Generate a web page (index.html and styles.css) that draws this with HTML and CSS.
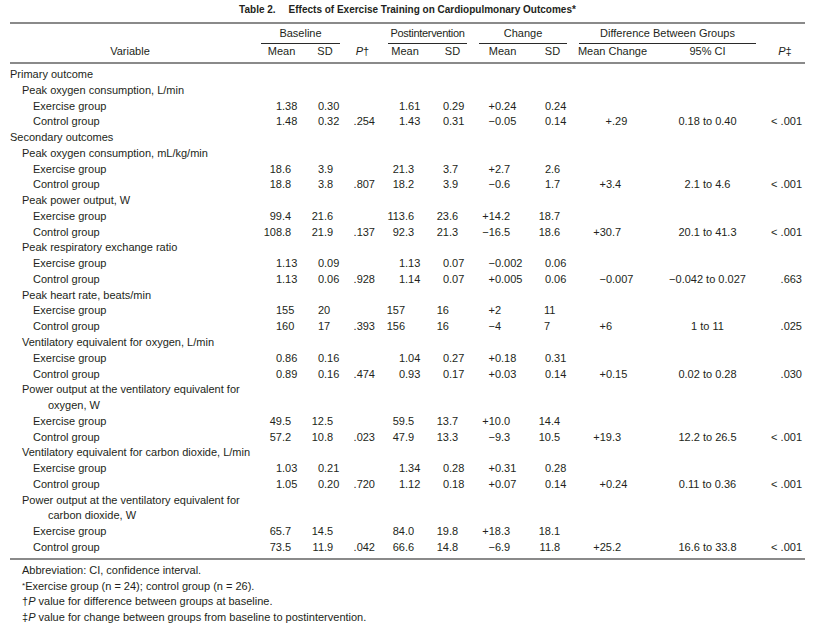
FILE: index.html
```html
<!DOCTYPE html>
<html lang="en">
<head>
<meta charset="utf-8">
<title>Table 2. Effects of Exercise Training on Cardiopulmonary Outcomes</title>
<link rel="stylesheet" href="styles.css">
</head>
<body>
<div class="page">
  <div class="title">Table 2.<span class="tgap">Effects of Exercise Training on Cardiopulmonary Outcomes*</span></div>
  <div class="rule"></div>
  <div class="row head1">
    <div></div>
    <div class="grp g-base">Baseline</div>
    <div></div>
    <div class="grp g-post">Postintervention</div>
    <div class="grp g-chg">Change</div>
    <div class="grp g-diff">Difference Between Groups</div>
    <div></div>
  </div>
  <div class="row head2">
    <div class="h hv">Variable</div>
    <div class="h">Mean</div>
    <div class="h">SD</div>
    <div class="h"><span class="it">P</span>†</div>
    <div class="h">Mean</div>
    <div class="h">SD</div>
    <div class="h">Mean</div>
    <div class="h">SD</div>
    <div class="h">Mean Change</div>
    <div class="h">95% CI</div>
    <div class="h"><span class="it">P</span>‡</div>
  </div>
  <div class="rule"></div>
  <div class="body">
    <div class="row"><div class="lab l0">Primary outcome</div></div>
    <div class="row"><div class="lab l1">Peak oxygen consumption, L/min</div></div>
    <div class="row">
      <div class="l2">Exercise group</div>
      <div class="bm"><span class="ip">1</span>.38</div><div class="bs"><span class="ip">0</span>.30</div><div class="bp"></div>
      <div class="pm"><span class="ip">1</span>.61</div><div class="ps"><span class="ip">0</span>.29</div>
      <div class="cm"><span class="ip">+0</span>.24</div><div class="cs"><span class="ip">0</span>.24</div>
    </div>
    <div class="row">
      <div class="l2">Control group</div>
      <div class="bm"><span class="ip">1</span>.48</div><div class="bs"><span class="ip">0</span>.32</div><div class="bp">.254</div>
      <div class="pm"><span class="ip">1</span>.43</div><div class="ps"><span class="ip">0</span>.31</div>
      <div class="cm"><span class="ip">−0</span>.05</div><div class="cs"><span class="ip">0</span>.14</div>
      <div class="dm"><span class="ip">+</span>.29</div><div class="ci">0.18 to 0.40</div><div class="p2">&lt; .001</div>
    </div>
    <div class="row"><div class="lab l0">Secondary outcomes</div></div>
    <div class="row"><div class="lab l1">Peak oxygen consumption, mL/kg/min</div></div>
    <div class="row">
      <div class="l2">Exercise group</div>
      <div class="bm"><span class="ip">18</span>.6</div><div class="bs"><span class="ip">3</span>.9</div><div class="bp"></div>
      <div class="pm"><span class="ip">21</span>.3</div><div class="ps"><span class="ip">3</span>.7</div>
      <div class="cm"><span class="ip">+2</span>.7</div><div class="cs"><span class="ip">2</span>.6</div>
    </div>
    <div class="row">
      <div class="l2">Control group</div>
      <div class="bm"><span class="ip">18</span>.8</div><div class="bs"><span class="ip">3</span>.8</div><div class="bp">.807</div>
      <div class="pm"><span class="ip">18</span>.2</div><div class="ps"><span class="ip">3</span>.9</div>
      <div class="cm"><span class="ip">−0</span>.6</div><div class="cs"><span class="ip">1</span>.7</div>
      <div class="dm"><span class="ip">+3</span>.4</div><div class="ci">2.1 to 4.6</div><div class="p2">&lt; .001</div>
    </div>
    <div class="row"><div class="lab l1">Peak power output, W</div></div>
    <div class="row">
      <div class="l2">Exercise group</div>
      <div class="bm"><span class="ip">99</span>.4</div><div class="bs"><span class="ip">21</span>.6</div><div class="bp"></div>
      <div class="pm"><span class="ip">113</span>.6</div><div class="ps"><span class="ip">23</span>.6</div>
      <div class="cm"><span class="ip">+14</span>.2</div><div class="cs"><span class="ip">18</span>.7</div>
    </div>
    <div class="row">
      <div class="l2">Control group</div>
      <div class="bm"><span class="ip">108</span>.8</div><div class="bs"><span class="ip">21</span>.9</div><div class="bp">.137</div>
      <div class="pm"><span class="ip">92</span>.3</div><div class="ps"><span class="ip">21</span>.3</div>
      <div class="cm"><span class="ip">−16</span>.5</div><div class="cs"><span class="ip">18</span>.6</div>
      <div class="dm"><span class="ip">+30</span>.7</div><div class="ci">20.1 to 41.3</div><div class="p2">&lt; .001</div>
    </div>
    <div class="row"><div class="lab l1">Peak respiratory exchange ratio</div></div>
    <div class="row">
      <div class="l2">Exercise group</div>
      <div class="bm"><span class="ip">1</span>.13</div><div class="bs"><span class="ip">0</span>.09</div><div class="bp"></div>
      <div class="pm"><span class="ip">1</span>.13</div><div class="ps"><span class="ip">0</span>.07</div>
      <div class="cm"><span class="ip">−0</span>.002</div><div class="cs"><span class="ip">0</span>.06</div>
    </div>
    <div class="row">
      <div class="l2">Control group</div>
      <div class="bm"><span class="ip">1</span>.13</div><div class="bs"><span class="ip">0</span>.06</div><div class="bp">.928</div>
      <div class="pm"><span class="ip">1</span>.14</div><div class="ps"><span class="ip">0</span>.07</div>
      <div class="cm"><span class="ip">+0</span>.005</div><div class="cs"><span class="ip">0</span>.06</div>
      <div class="dm"><span class="ip">−0</span>.007</div><div class="ci">−0.042 to 0.027</div><div class="p2">.663</div>
    </div>
    <div class="row"><div class="lab l1">Peak heart rate, beats/min</div></div>
    <div class="row">
      <div class="l2">Exercise group</div>
      <div class="bm whole">155</div><div class="bs whole">20</div><div class="bp"></div>
      <div class="pm"><span class="ip">157</span></div><div class="ps"><span class="ip">16</span></div>
      <div class="cm"><span class="ip">+2</span></div><div class="cs whole">11</div>
    </div>
    <div class="row">
      <div class="l2">Control group</div>
      <div class="bm whole">160</div><div class="bs whole">17</div><div class="bp">.393</div>
      <div class="pm"><span class="ip">156</span></div><div class="ps"><span class="ip">16</span></div>
      <div class="cm"><span class="ip">−4</span></div><div class="cs whole">7</div>
      <div class="dm"><span class="ip">+6</span></div><div class="ci">1 to 11</div><div class="p2">.025</div>
    </div>
    <div class="row"><div class="lab l1">Ventilatory equivalent for oxygen, L/min</div></div>
    <div class="row">
      <div class="l2">Exercise group</div>
      <div class="bm"><span class="ip">0</span>.86</div><div class="bs"><span class="ip">0</span>.16</div><div class="bp"></div>
      <div class="pm"><span class="ip">1</span>.04</div><div class="ps"><span class="ip">0</span>.27</div>
      <div class="cm"><span class="ip">+0</span>.18</div><div class="cs"><span class="ip">0</span>.31</div>
    </div>
    <div class="row">
      <div class="l2">Control group</div>
      <div class="bm"><span class="ip">0</span>.89</div><div class="bs"><span class="ip">0</span>.16</div><div class="bp">.474</div>
      <div class="pm"><span class="ip">0</span>.93</div><div class="ps"><span class="ip">0</span>.17</div>
      <div class="cm"><span class="ip">+0</span>.03</div><div class="cs"><span class="ip">0</span>.14</div>
      <div class="dm"><span class="ip">+0</span>.15</div><div class="ci">0.02 to 0.28</div><div class="p2">.030</div>
    </div>
    <div class="row"><div class="lab l1 hang">Power output at the ventilatory equivalent for<br>oxygen, W</div></div>
    <div class="row">
      <div class="l2">Exercise group</div>
      <div class="bm"><span class="ip">49</span>.5</div><div class="bs"><span class="ip">12</span>.5</div><div class="bp"></div>
      <div class="pm"><span class="ip">59</span>.5</div><div class="ps"><span class="ip">13</span>.7</div>
      <div class="cm"><span class="ip">+10</span>.0</div><div class="cs"><span class="ip">14</span>.4</div>
    </div>
    <div class="row">
      <div class="l2">Control group</div>
      <div class="bm"><span class="ip">57</span>.2</div><div class="bs"><span class="ip">10</span>.8</div><div class="bp">.023</div>
      <div class="pm"><span class="ip">47</span>.9</div><div class="ps"><span class="ip">13</span>.3</div>
      <div class="cm"><span class="ip">−9</span>.3</div><div class="cs"><span class="ip">10</span>.5</div>
      <div class="dm"><span class="ip">+19</span>.3</div><div class="ci">12.2 to 26.5</div><div class="p2">&lt; .001</div>
    </div>
    <div class="row"><div class="lab l1">Ventilatory equivalent for carbon dioxide, L/min</div></div>
    <div class="row">
      <div class="l2">Exercise group</div>
      <div class="bm"><span class="ip">1</span>.03</div><div class="bs"><span class="ip">0</span>.21</div><div class="bp"></div>
      <div class="pm"><span class="ip">1</span>.34</div><div class="ps"><span class="ip">0</span>.28</div>
      <div class="cm"><span class="ip">+0</span>.31</div><div class="cs"><span class="ip">0</span>.28</div>
    </div>
    <div class="row">
      <div class="l2">Control group</div>
      <div class="bm"><span class="ip">1</span>.05</div><div class="bs"><span class="ip">0</span>.20</div><div class="bp">.720</div>
      <div class="pm"><span class="ip">1</span>.12</div><div class="ps"><span class="ip">0</span>.18</div>
      <div class="cm"><span class="ip">+0</span>.07</div><div class="cs"><span class="ip">0</span>.14</div>
      <div class="dm"><span class="ip">+0</span>.24</div><div class="ci">0.11 to 0.36</div><div class="p2">&lt; .001</div>
    </div>
    <div class="row"><div class="lab l1 hang">Power output at the ventilatory equivalent for<br>carbon dioxide, W</div></div>
    <div class="row">
      <div class="l2">Exercise group</div>
      <div class="bm"><span class="ip">65</span>.7</div><div class="bs"><span class="ip">14</span>.5</div><div class="bp"></div>
      <div class="pm"><span class="ip">84</span>.0</div><div class="ps"><span class="ip">19</span>.8</div>
      <div class="cm"><span class="ip">+18</span>.3</div><div class="cs"><span class="ip">18</span>.1</div>
    </div>
    <div class="row">
      <div class="l2">Control group</div>
      <div class="bm"><span class="ip">73</span>.5</div><div class="bs"><span class="ip">11</span>.9</div><div class="bp">.042</div>
      <div class="pm"><span class="ip">66</span>.6</div><div class="ps"><span class="ip">14</span>.8</div>
      <div class="cm"><span class="ip">−6</span>.9</div><div class="cs"><span class="ip">11</span>.8</div>
      <div class="dm"><span class="ip">+25</span>.2</div><div class="ci">16.6 to 33.8</div><div class="p2">&lt; .001</div>
    </div>
  </div>
  <div class="rule"></div>
  <div class="notes">
    <p>Abbreviation: CI, confidence interval.</p>
    <p><span class="ast">*</span>Exercise group (n = 24); control group (n = 26).</p>
    <p>†<span class="it">P</span> value for difference between groups at baseline.</p>
    <p>‡<span class="it">P</span> value for change between groups from baseline to postintervention.</p>
  </div>
</div>
</body>
</html>
```
FILE: styles.css
```css
* {
  box-sizing: border-box;
  margin: 0;
  padding: 0;
}

body {
  margin: 0;
  background: #ffffff;
  color: #231f20;
  font-family: "Liberation Sans", Arial, sans-serif;
  font-size: 11px;
  line-height: 15.77px;
}

.page {
  width: 795px;
  margin-left: 10px;
}

.title {
  height: 22px;
  padding-top: 2px;
  text-align: center;
  font-weight: bold;
  font-size: 10px;
}

.tgap {
  margin-left: 13px;
}

.rule {
  height: 2px;
  background: #8a8a8a;
}

.row {
  display: grid;
  grid-template-columns: 248px 47px 40px 35px 50px 45px 55px 45px 75px 115px 40px;
  white-space: nowrap;
}

.head1 {
  height: 20px;
  padding-top: 2px;
}

.grp {
  grid-column: span 2;
  text-align: center;
  border-bottom: 1px solid #2a2a2a;
  margin: 0 5px 0 3px;
}

.g-post {
  margin: 0 8px 0 8px;
  letter-spacing: -0.3px;
}

.g-chg {
  margin: 0 8px 0 4px;
}

.g-diff {
  margin: 0 9px 0 4px;
}

.head2 {
  height: 18px;
}

.h {
  text-align: center;
}

.hv {
  padding-right: 8px;
}

.it {
  font-style: italic;
}

.body {
  padding: 3px 0 2px;
}

.lab {
  grid-column: 1 / -1;
}

.l1 {
  padding-left: 12px;
}

.l2 {
  padding-left: 23px;
}

.hang {
  padding-left: 38px;
  text-indent: -26px;
}

.ip {
  display: inline-block;
  text-align: right;
}

.bm .ip { width: 24px; }
.bs .ip { width: 19px; }
.pm .ip { width: 25px; }
.ps .ip { width: 19px; }
.cm .ip { width: 26px; }
.cs .ip { width: 21px; }
.dm .ip { width: 37px; }

.bm.whole { padding-left: 18px; }
.bs.whole { padding-left: 13px; }
.cs.whole { padding-left: 14px; }

.bp {
  text-align: right;
  padding-right: 5px;
}

.ci {
  text-align: center;
}

.p2 {
  text-align: right;
  padding-right: 3px;
}

.notes {
  padding-top: 3px;
  padding-left: 12px;
  line-height: 15.3px;
}

.ast {
  font-size: 8px;
  vertical-align: 2px;
}
```
